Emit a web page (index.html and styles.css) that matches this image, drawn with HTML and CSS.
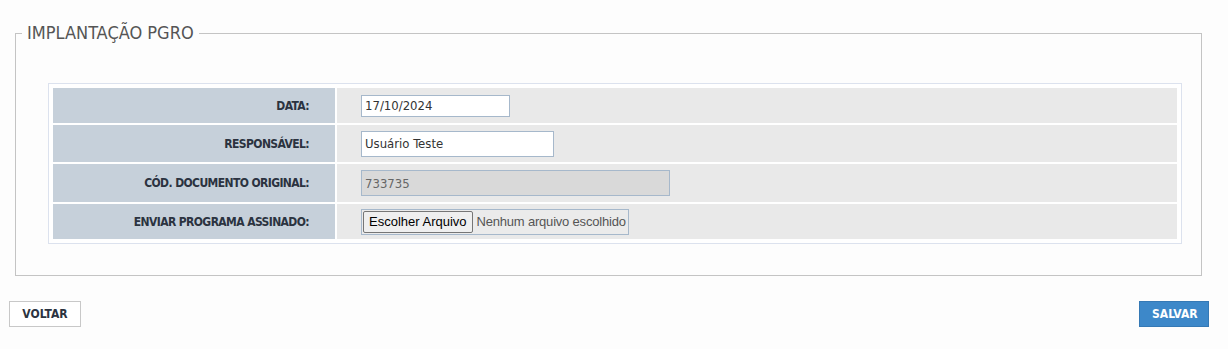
FILE: index.html
```html
<!DOCTYPE html>
<html lang="pt-BR">
<head>
    <meta charset="UTF-8">
    <meta name="viewport" content="width=device-width, initial-scale=1.0">
    <title>Implantação PGRO</title>
    <link rel="stylesheet" href="styles.css">
</head>
<body>
    <fieldset class="box">
        <legend>IMPLANTAÇÃO PGRO</legend>

        <table class="form-table">
            <tr class="row-1">
                <th>DATA:</th>
                <td><input type="text" class="field field-date" value="17/10/2024"></td>
            </tr>
            <tr class="row-2">
                <th>RESPONSÁVEL:</th>
                <td><input type="text" class="field field-name" value="Usuário Teste"></td>
            </tr>
            <tr class="row-3">
                <th>CÓD. DOCUMENTO ORIGINAL:</th>
                <td><input type="text" class="field field-code" value="733735" disabled></td>
            </tr>
            <tr class="row-4">
                <th>ENVIAR PROGRAMA ASSINADO:</th>
                <td>
                    <label class="file-field">
                        <span class="file-btn">Escolher Arquivo</span>
                        <span class="file-name">Nenhum arquivo escolhido</span>
                    </label>
                </td>
            </tr>
        </table>
    </fieldset>

    <div class="actions">
        <button class="btn btn-back">VOLTAR</button>
        <button class="btn btn-save">SALVAR</button>
    </div>
</body>
</html>
```

FILE: styles.css
```css
body {
    margin: 0;
    padding: 22px 26px 0 15px;
    background: #fdfdfd;
    font-family: "DejaVu Sans Condensed", "DejaVu Sans", sans-serif;
    color: #333;
}

.box {
    margin: 0;
    padding: 39px 19px 31px 32px;
    border: 1px solid #c4c4c4;
    min-width: 0;
}

.box legend {
    margin-left: -26px;
    padding: 0 5px;
    font-size: 18px;
    color: #555;
    line-height: 22px;
}

.form-table {
    width: 100%;
    border: 1px solid #dce2ee;
    border-spacing: 2px;
    padding: 2px;
    background: #fff;
}

.form-table th {
    width: 256px;
    padding: 0 26px 0 0;
    background: #c6d0da;
    text-align: right;
    font-size: 12px;
    font-weight: bold;
    letter-spacing: -0.6px;
    color: #2b3340;
    white-space: nowrap;
}

.form-table td {
    padding: 0 0 0 24px;
    background: #e9e9e9;
}

.row-1 th, .row-1 td { height: 35px; }
.row-2 th, .row-2 td { height: 37px; }
.row-3 th, .row-3 td { height: 38px; }
.row-4 th, .row-4 td { height: 35px; }

.field {
    display: block;
    box-sizing: border-box;
    height: 26px;
    margin: 0;
    padding: 0 3px;
    border: 1px solid #a6b8cb;
    background: #fff;
    font-family: inherit;
    font-size: 13px;
    color: #333;
}

.field-date {
    width: 149px;
    height: 22px;
}

.field-name {
    width: 193px;
}

.field-code {
    width: 309px;
    background: #d9d9d9;
    color: #666;
}

.file-field {
    display: inline-flex;
    align-items: center;
    box-sizing: border-box;
    height: 26px;
    min-width: 268px;
    padding-right: 1px;
    border: 1px solid #a6b8cb;
    background: #ebebeb;
    font-family: "Liberation Sans", Arial, sans-serif;
    font-size: 13px;
    white-space: nowrap;
}

.file-btn {
    flex-shrink: 0;
    box-sizing: border-box;
    height: 22px;
    margin-left: 1px;
    padding: 0 5px;
    line-height: 20px;
    border: 1px solid #767676;
    border-radius: 2px;
    background: #efefef;
    color: #000;
}

.file-name {
    margin-left: 4px;
    letter-spacing: -0.2px;
    color: #555;
}

.actions {
    display: flex;
    justify-content: space-between;
    margin: 25px -7px 0 -6px;
}

.btn {
    height: 26px;
    padding: 0 12px;
    font-family: inherit;
    font-size: 12px;
    font-weight: bold;
    cursor: pointer;
}

.btn-back {
    width: 72px;
    background: #fff;
    border: 1px solid #c8c8c8;
    color: #2b3340;
}

.btn-save {
    width: 70px;
    background: #3d88c9;
    border: 1px solid #3579b5;
    color: #fff;
}
```
